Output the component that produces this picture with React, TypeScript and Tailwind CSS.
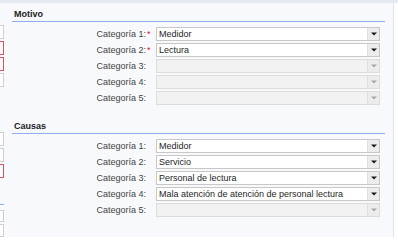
import React from 'react';

type Row = { label: string; value?: string; required?: boolean; disabled?: boolean };

const MOTIVO: Row[] = [
  { label: 'Categoría 1:', value: 'Medidor', required: true },
  { label: 'Categoría 2:', value: 'Lectura', required: true },
  { label: 'Categoría 3:', disabled: true },
  { label: 'Categoría 4:', disabled: true },
  { label: 'Categoría 5:', disabled: true },
];

const CAUSAS: Row[] = [
  { label: 'Categoría 1:', value: 'Medidor' },
  { label: 'Categoría 2:', value: 'Servicio' },
  { label: 'Categoría 3:', value: 'Personal de lectura' },
  { label: 'Categoría 4:', value: 'Mala atención de atención de personal lectura' },
  { label: 'Categoría 5:', disabled: true },
];

const Caret: React.FC<{ disabled?: boolean }> = ({ disabled }) => (
  <svg width="6" height="4" viewBox="0 0 6 4">
    <path d="M0 0.5h6L3 3.5z" fill={disabled ? '#a8a8a8' : '#1a1a1a'} />
  </svg>
);

const Select: React.FC<{ row: Row }> = ({ row }) => (
  <div
    className={`flex h-[14px] w-[224px] border ${
      row.disabled ? 'bg-[#f2f2f2] border-[#dcdcdc]' : 'bg-white border-[#c8c8c8]'
    }`}
  >
    <div className="flex-1 pl-[2px] text-[9px] leading-[12px] text-[#1e1e1e] whitespace-nowrap overflow-hidden">
      {row.value}
    </div>
    <div className="w-[12px] flex items-center justify-center bg-[#ececec] border-l border-[#e0e0e0]">
      <Caret disabled={row.disabled} />
    </div>
  </div>
);

const Section: React.FC<{ title: string; rows: Row[] }> = ({ title, rows }) => (
  <div>
    <div className="h-[18px] flex items-end pl-[2px] pb-[1px] text-[9px] font-bold text-[#222] leading-[11px]">
      {title}
    </div>
    <div className="h-px bg-[#8fb1ea]" />
    <div className="flex flex-col gap-[2px] pt-[5px]">
      {rows.map((r) => (
        <div key={r.label} className="flex items-center h-[14px]">
          <span className="w-[134px] text-right text-[9px] text-[#444] leading-[12px]">{r.label}</span>
          <span className="w-[10px] pl-[1px] text-[9px] leading-[12px] text-[#e0202a]">
            {r.required ? '*' : ''}
          </span>
          <Select row={r} />
        </div>
      ))}
    </div>
  </div>
);

const Stub: React.FC<{ red?: boolean }> = ({ red }) => (
  <div
    className={`h-[14px] w-[4px] border-r border-y bg-white ${red ? 'border-[#d9535f]' : 'border-[#cfcfcf]'}`}
  />
);

export default function App() {
  return (
    <div
      className="w-[398px] h-[245px] overflow-hidden bg-white"
      style={{ fontFamily: '"Liberation Sans", Arial, sans-serif' }}
    >
      <div className="h-[3px] bg-[#e5e9f2]" />
      <div className="flex h-[242px]">
        <div className="w-[394px] h-[234px] bg-[#f7f9fd] border-r border-[#dfe3ea] flex">
          {/* left cut-off column */}
          <div className="w-[4px] flex flex-col">
            <div className="h-[24px]" />
            <div className="flex flex-col gap-[2px]">
              <Stub />
              <Stub red />
              <Stub red />
              <Stub />
            </div>
            <div className="h-[51px]" />
            <div className="flex flex-col gap-[2px]">
              <Stub />
              <Stub />
              <Stub red />
            </div>
            <div className="h-[29px]" />
            <div className="h-px bg-[#8fb1ea]" />
            <div className="h-[5px]" />
            <Stub />
            <div className="h-[2px]" />
            <Stub />
          </div>
          {/* main */}
          <div className="ml-[8px] w-[373px]">
            <Section title="Motivo" rows={MOTIVO} />
            <div className="h-[10px]" />
            <Section title="Causas" rows={CAUSAS} />
          </div>
        </div>
      </div>
    </div>
  );
}
